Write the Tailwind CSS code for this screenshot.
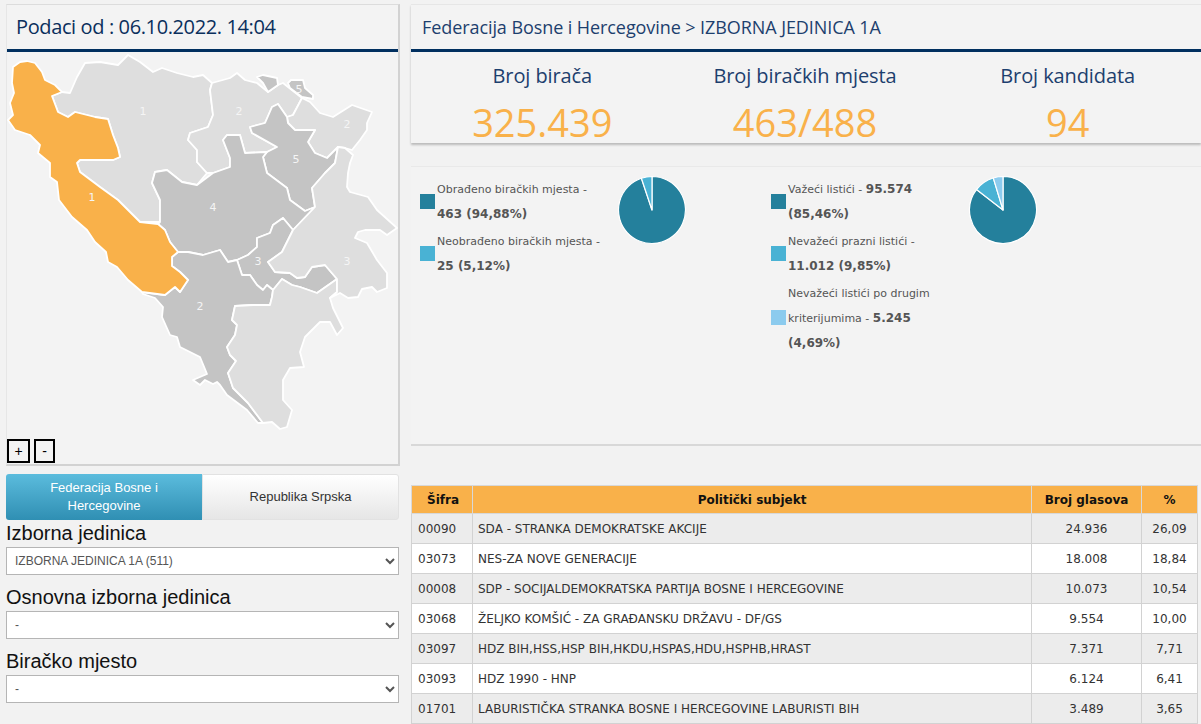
<!DOCTYPE html>
<html lang="en">
<head>
    <meta charset="UTF-8">
    <meta name="viewport" content="width=device-width, initial-scale=1.0">
    <script src="https://cdn.jsdelivr.net/npm/@tailwindcss/browser@4"></script>
    <title>Rezultati izbora</title>
</head>
<body class="bg-[#f2f2f2] h-[724px] overflow-hidden font-['Liberation_Sans',sans-serif]">
    <div class="flex items-start pt-[4px]">
        <!-- left column -->
        <div class="w-[394px] ml-[6px] shrink-0">
            <div class="relative h-[462px] bg-[#f3f3f3] border-l border-l-[#e6e6e6] border-r-2 border-b-2 border-[#d2d2d2] border-t border-t-[#dcdcdc]">
                <div class="h-[44px] border-b-[3px] border-[#002f5f] box-content pl-[9px] leading-[44px] text-[20px] tracking-[-0.38px] text-[#0a2f5c] font-['Open_Sans',sans-serif]">Podaci od : 06.10.2022. 14:04</div>
                <svg class="absolute left-[-7px] top-[-5px]" width="410" height="440" viewBox="0 0 410 440">
                    <g stroke="#fff" stroke-width="1.8" stroke-linejoin="round">
                        <path fill="#dedede" d="M52,96 62,92 70,93 77,77 85,63 100,62 118,65 128,55 140,62 153,72 162,68 177,73 193,77 203,75 212,83 210,90 213,115 208,127 190,133 188,140 197,150 197,162 207,173 197,185 182,182 167,170 155,172 152,183 160,200 160,222 140,222 118,200 100,187 80,172 77,163 80,160 113,160 120,157 118,148 113,135 108,119 95,117 75,112 68,117 58,112Z"/>
                        <path fill="#dedede" d="M212,83 230,78 237,73 245,80 257,83 268,92 278,85 283,83 302,98 293,115 287,117 278,104 272,107 265,123 250,127 252,133 277,147 267,152 245,153 240,135 227,135 223,140 230,158 230,167 213,173 207,173 197,162 197,150 188,140 190,133 208,127 213,115 210,90Z"/>
                        <path fill="#dedede" d="M302,98 310,102 320,113 333,117 352,105 372,112 367,123 367,130 360,140 352,150 345,148 338,147 327,158 315,153 308,142 315,130 295,130 288,123 287,117 293,115Z"/>
                        <path fill="#c4c4c4" d="M278,104 287,117 288,123 295,130 315,130 308,142 315,153 327,158 338,147 335,163 325,173 312,188 315,207 305,211 290,200 287,188 267,173 263,157 267,152 277,147 252,133 250,127 265,123 272,107Z"/>
                        <path fill="#c4c4c4" d="M155,172 167,170 182,182 197,185 213,173 230,167 230,158 223,140 227,135 240,135 245,153 267,152 263,157 267,173 287,188 290,200 305,211 315,207 293,230 283,218 273,225 270,233 257,238 257,247 248,255 237,260 228,262 220,250 203,255 188,252 178,252 170,242 165,230 158,224 160,222 160,200 152,183Z"/>
                        <path fill="#c4c4c4" d="M283,218 293,230 282,252 268,262 275,272 290,273 297,278 305,277 312,267 325,265 337,279 317,293 300,287 292,285 282,279 273,290 267,285 263,290 257,285 250,275 242,275 237,260 248,255 257,247 257,238 270,233 273,225Z"/>
                        <path fill="#c4c4c4" d="M178,252 188,252 203,255 220,250 228,262 237,260 242,275 250,275 257,285 263,290 267,285 273,290 272,297 270,305 253,305 235,306 232,320 237,325 235,335 227,347 230,355 236,361 228,373 233,388 248,403 263,423 258,423 247,410 227,395 220,385 217,382 213,384 205,380 200,385 193,380 207,374 200,357 180,347 177,337 170,335 162,317 163,307 155,298 143,294 142,292 165,295 175,287 180,292 188,280 180,272 172,266 172,257Z"/>
                        <path fill="#dedede" d="M282,279 292,285 300,287 317,293 337,279 337,292 330,298 333,308 343,328 337,335 330,322 320,322 305,337 300,352 304,367 290,368 283,380 283,400 292,410 287,427 280,429 272,422 263,423 248,403 233,388 228,373 236,361 230,355 227,347 235,335 237,325 232,320 235,306 253,305 270,305 272,297 273,290Z"/>
                        <path fill="#dedede" d="M338,147 345,148 353,155 350,163 348,173 347,187 350,192 368,197 377,210 397,228 387,235 380,230 365,230 358,232 355,238 367,243 377,260 387,273 387,288 377,292 372,287 362,289 358,297 348,298 340,293 330,298 337,292 337,279 325,265 312,267 305,277 297,278 290,273 275,272 268,262 282,252 293,230 315,207 312,188 325,173 335,163Z"/>
                        <path fill="#c4c4c4" d="M257,77 263,75 277,78 278,85 268,92 263,83Z"/>
                        <path fill="#c4c4c4" d="M288,83 291,80 303,80 305,88 313,95 313,99 302,97 290,88Z"/>
                        <path fill="#f9b14a" d="M13,67 20,62 27,61 35,63 42,72 45,80 55,85 62,92 52,96 58,112 68,117 75,112 95,117 108,119 113,135 118,148 120,157 113,160 80,160 77,163 80,172 100,187 118,200 140,222 158,224 165,230 170,242 178,252 172,257 172,266 180,272 188,280 180,292 175,287 165,295 142,292 128,280 117,267 108,262 106,252 95,242 87,230 72,217 59,200 57,182 50,177 50,163 38,153 40,145 30,135 15,130 8,120 13,115 10,103 14,93 12,83Z"/>
                    </g>
                    <g fill="#f5f5f5" font-size="11" text-anchor="middle" font-family="DejaVu Sans">
                        <text x="143" y="115">1</text><text x="239" y="115">2</text><text x="347" y="128">2</text>
                        <text x="296" y="163">5</text><text x="299" y="93">5</text><text x="92" y="201">1</text>
                        <text x="213" y="211">4</text><text x="258" y="265">3</text><text x="347" y="265">3</text>
                        <text x="200" y="310">2</text>
                    </g>
                </svg>
                <div class="absolute left-[0px] top-[434px] flex gap-[4px]">
                    <button class="w-[23px] h-[24px] border-2 border-black text-[14px] leading-none text-black">+</button>
                    <button class="w-[21px] h-[24px] border-2 border-black text-[14px] leading-none text-black">-</button>
                </div>
            </div>
            <div class="flex mt-[8px] h-[46px] text-[13px] leading-[18px] text-center">
                <div class="w-[196px] flex items-center justify-center px-[20px] rounded-l-[3px] text-white bg-gradient-to-b from-[#5bbcdd] to-[#2f8fb3]">Federacija Bosne i Hercegovine</div>
                <div class="w-[197px] flex items-center justify-center rounded-r-[3px] text-[#333] border border-[#e2e2e2] bg-gradient-to-b from-white to-[#e6e6e6]">Republika Srpska</div>
            </div>
            <div class="w-[393px] text-[20px] leading-[24px] text-[#111]">
                <div class="mt-[1px]">Izborna jedinica</div>
                <select class="block w-full h-[28px] mt-[2px] px-[4px] bg-white border border-[#b5b5b5] text-[12px] text-[#555]"><option>IZBORNA JEDINICA 1A (511)</option></select>
                <div class="mt-[10px]">Osnovna izborna jedinica</div>
                <select class="block w-full h-[28px] mt-[2px] px-[4px] bg-white border border-[#b5b5b5] text-[12px] text-[#555]"><option>-</option></select>
                <div class="mt-[10px]">Biračko mjesto</div>
                <select class="block w-full h-[28px] mt-[2px] px-[4px] bg-white border border-[#b5b5b5] text-[12px] text-[#555]"><option>-</option></select>
            </div>
        </div>
        <!-- right column -->
        <div class="w-[790px] ml-[11px] shrink-0">
            <div class="bg-[#f3f3f3] border-t border-[#e6e6e6] shadow-[0_2px_2px_#bbb] h-[139px]">
                <div class="h-[44px] border-b-[3px] border-[#002f5f] box-content pl-[11px] leading-[44px] text-[18px] tracking-[-0.08px] text-[#1d3f6e] font-['Open_Sans',sans-serif]">Federacija Bosne i Hercegovine &gt; IZBORNA JEDINICA 1A</div>
                <div class="grid grid-cols-3 text-center font-['Open_Sans',sans-serif] pr-[2px]">
                    <div><div class="text-[20px] leading-[28px] mt-[10px] tracking-[-0.1px] text-[#1d3f6e]">Broj birača</div><div class="text-[38px] leading-[46px] mt-[9px] text-[#f9b14a]">325.439</div></div>
                    <div><div class="text-[20px] leading-[28px] mt-[10px] tracking-[-0.1px] text-[#1d3f6e]">Broj biračkih mjesta</div><div class="text-[38px] leading-[46px] mt-[9px] text-[#f9b14a]">463/488</div></div>
                    <div><div class="text-[20px] leading-[28px] mt-[10px] tracking-[-0.1px] text-[#1d3f6e]">Broj kandidata</div><div class="text-[38px] leading-[46px] mt-[9px] text-[#f9b14a]">94</div></div>
                </div>
            </div>
            <div class="flex mt-[23px] h-[280px] bg-[#f3f3f3] border-t border-[#e9e9e9] border-b-2 border-b-[#d8d8d8] text-[11px] leading-[25px] text-[#555] font-['DejaVu_Sans',sans-serif]">
                <div class="w-[351px] flex items-start shrink-0">
                    <div class="w-[182px] ml-[9px] mt-[10px] flex flex-col gap-[2px]">
                        <div class="flex items-center gap-[2px]"><span class="w-[15px] h-[15px] mb-[2px] shrink-0 bg-[#24809c]"></span><span>Obrađeno biračkih mjesta - <b class="text-[12px]">463 (94,88%)</b></span></div>
                        <div class="flex items-center gap-[2px]"><span class="w-[15px] h-[15px] mb-[2px] shrink-0 bg-[#49b2d4]"></span><span>Neobrađeno biračkih mjesta - <b class="text-[12px]">25 (5,12%)</b></span></div>
                    </div>
                    <svg class="mt-[8px] ml-[15px]" width="70" height="70" viewBox="-35 -35 70 70">
                        <g stroke="#fff" stroke-width="1.2" stroke-linejoin="round">
                            <path fill="#24809c" d="M0,0 L0,-33.5 A33.5,33.5 0 1 1 -10.6,-31.78Z"/>
                            <path fill="#49b2d4" d="M0,0 L-10.6,-31.78 A33.5,33.5 0 0 1 0,-33.5Z"/>
                        </g>
                    </svg>
                </div>
                <div class="flex items-start">
                    <div class="w-[179px] ml-[9px] mt-[10px] flex flex-col gap-[2px]">
                        <div class="flex items-center gap-[2px]"><span class="w-[15px] h-[15px] mb-[2px] shrink-0 bg-[#24809c]"></span><span>Važeći listići - <b class="text-[12px]">95.574 (85,46%)</b></span></div>
                        <div class="flex items-center gap-[2px]"><span class="w-[15px] h-[15px] mb-[2px] shrink-0 bg-[#49b2d4]"></span><span>Nevažeći prazni listići - <b class="text-[12px]">11.012 (9,85%)</b></span></div>
                        <div class="flex items-center gap-[2px]"><span class="w-[15px] h-[15px] mb-[2px] shrink-0 bg-[#8ccbee]"></span><span>Nevažeći listići po drugim kriterijumima - <b class="text-[12px]">5.245 (4,69%)</b></span></div>
                    </div>
                    <svg class="mt-[8px] ml-[18px]" width="70" height="70" viewBox="-35 -35 70 70">
                        <g stroke="#fff" stroke-width="1.2" stroke-linejoin="round">
                            <path fill="#24809c" d="M0,0 L0,-33.5 A33.5,33.5 0 1 1 -26.5,-20.46Z"/>
                            <path fill="#49b2d4" d="M0,0 L-26.5,-20.46 A33.5,33.5 0 0 1 -9.74,-32.05Z"/>
                            <path fill="#8ccbee" d="M0,0 L-9.74,-32.05 A33.5,33.5 0 0 1 0,-33.5Z"/>
                        </g>
                    </svg>
                </div>
            </div>
            <table class="mt-[39px] w-[786px] table-fixed border-collapse text-[12px] text-[#333] font-['DejaVu_Sans',sans-serif] [&_td]:border [&_td]:border-[#d2d2d2] [&_td]:h-[30px] [&_td]:px-[5px] [&_td:first-child]:pl-[6px] [&_th]:border [&_th]:border-[#d8d8d8] [&_th]:h-[28px] [&_th]:text-[#111] [&_th:first-child]:pl-[2px]">
                <colgroup><col class="w-[61px]"><col class="w-[559px]"><col class="w-[110px]"><col class="w-[56px]"></colgroup>
                <thead class="bg-[#f9b14a]">
                    <tr><th>Šifra</th><th>Politički subjekt</th><th>Broj glasova</th><th>%</th></tr>
                </thead>
                <tbody>
                    <tr class="bg-[#ececec]"><td>00090</td><td>SDA - STRANKA DEMOKRATSKE AKCIJE</td><td class="text-center">24.936</td><td class="text-center">26,09</td></tr>
                    <tr class="bg-white"><td>03073</td><td>NES-ZA NOVE GENERACIJE</td><td class="text-center">18.008</td><td class="text-center">18,84</td></tr>
                    <tr class="bg-[#ececec]"><td>00008</td><td>SDP - SOCIJALDEMOKRATSKA PARTIJA BOSNE I HERCEGOVINE</td><td class="text-center">10.073</td><td class="text-center">10,54</td></tr>
                    <tr class="bg-white"><td>03068</td><td>ŽELJKO KOMŠIĆ - ZA GRAĐANSKU DRŽAVU - DF/GS</td><td class="text-center">9.554</td><td class="text-center">10,00</td></tr>
                    <tr class="bg-[#ececec]"><td>03097</td><td>HDZ BIH,HSS,HSP BIH,HKDU,HSPAS,HDU,HSPHB,HRAST</td><td class="text-center">7.371</td><td class="text-center">7,71</td></tr>
                    <tr class="bg-white"><td>03093</td><td>HDZ 1990 - HNP</td><td class="text-center">6.124</td><td class="text-center">6,41</td></tr>
                    <tr class="bg-[#ececec]"><td>01701</td><td>LABURISTIČKA STRANKA BOSNE I HERCEGOVINE LABURISTI BIH</td><td class="text-center">3.489</td><td class="text-center">3,65</td></tr>
                </tbody>
            </table>
        </div>
    </div>
</body>
</html>
